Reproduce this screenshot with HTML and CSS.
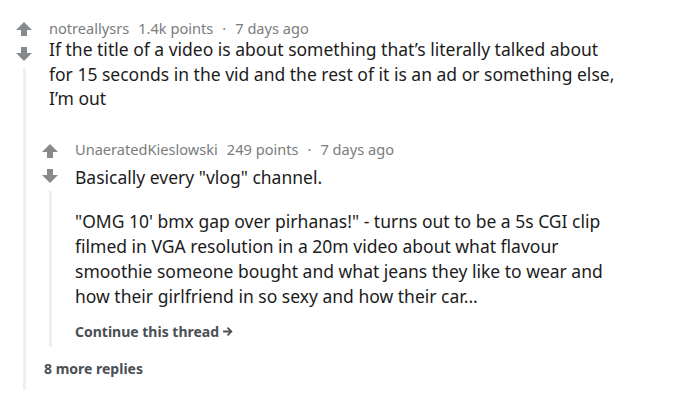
FILE: index.html
```html
<!DOCTYPE html>
<html>
<head>
<meta charset="utf-8">
<link rel="stylesheet" href="styles.css">
</head>
<body>
<div class="comment">
  <div class="votes">
    <svg class="arrow up" viewBox="0 0 16 14"><path d="M8 0 L16 8 L11 8 L11 14 L5 14 L5 8 L0 8 Z"/></svg>
    <svg class="arrow down" viewBox="0 0 16 14"><path d="M8 14 L16 6 L11 6 L11 0 L5 0 L5 6 L0 6 Z"/></svg>
    <div class="thread"></div>
  </div>
  <div class="content">
    <div class="meta"><span class="user">notreallysrs</span><span class="pts">1.4k points</span><span class="dot">·</span><span>7 days ago</span></div>
    <div class="body">
      <p>If the title of a video is about something that’s literally talked about for 15 seconds in the vid and the rest of it is an ad or something else, I’m out</p>
    </div>
    <div class="comment child">
      <div class="votes">
        <svg class="arrow up" viewBox="0 0 16 14"><path d="M8 0 L16 8 L11 8 L11 14 L5 14 L5 8 L0 8 Z"/></svg>
        <svg class="arrow down" viewBox="0 0 16 14"><path d="M8 14 L16 6 L11 6 L11 0 L5 0 L5 6 L0 6 Z"/></svg>
        <div class="thread"></div>
      </div>
      <div class="content">
        <div class="meta"><span class="user">UnaeratedKieslowski</span><span class="pts">249 points</span><span class="dot">·</span><span>7 days ago</span></div>
        <div class="body">
          <p class="first">Basically every "vlog" channel.</p>
          <p>"OMG 10' bmx gap over pirhanas!" - turns out to be a 5s CGI clip filmed in VGA resolution in a 20m video about what flavour smoothie someone bought and what jeans they like to wear and how their girlfriend in so sexy and how their car...</p>
        </div>
        <div class="more">Continue this thread <svg class="go" viewBox="0 0 10 10"><path d="M1 5 H8.5 M5 1.5 L8.5 5 L5 8.5" /></svg></div>
      </div>
    </div>
    <div class="replies">8 more replies</div>
  </div>
</div>
</body>
</html>
```
FILE: styles.css
```css
html, body {
  margin: 0;
  background: #ffffff;
}
body {
  padding: 19px 50px 0 16px;
  font-family: "Noto Sans", "Open Sans", sans-serif;
  color: #1c1c1c;
}
.comment {
  display: flex;
}
.votes {
  width: 16px;
  display: flex;
  flex-direction: column;
  align-items: center;
  flex: none;
  margin-right: 17px;
}
.arrow {
  display: block;
  width: 16px;
  height: 14px;
  fill: #878a8c;
}
.up {
  margin-top: 3px;
}
.down {
  margin-top: 11px;
}
.thread {
  width: 3px;
  flex: 1;
  background: #edeff1;
  margin-top: 7px;
}
.content {
  flex: 1;
  min-width: 0;
}
.meta {
  font-size: 14.6px;
  line-height: 18px;
  color: #7c7c7c;
  white-space: nowrap;
}
.meta .user {
  color: #787c7e;
  margin-right: 9px;
}
.meta .dot {
  margin: 0 9px;
}
.body p {
  margin: 0;
  font-size: 17.5px;
  line-height: 24.5px;
}
.child {
  margin-left: -7px;
  margin-top: 29px;
}
.child .up {
  margin-top: 4px;
}
.child .thread {
  margin-top: 8px;
}
.child .meta {
  margin-bottom: 7px;
}
.child .body p.first {
  margin-bottom: 19px;
}
.child .body p {
  line-height: 25px;
}
.more {
  font-size: 14px;
  line-height: 18px;
  font-weight: 700;
  color: #4a4f55;
  margin-top: 14px;
  padding-bottom: 6px;
  display: flex;
  align-items: center;
}
.go {
  width: 11px;
  height: 11px;
  margin-left: 3px;
  fill: none;
  stroke: #4a4f55;
  stroke-width: 1.6;
}
.replies {
  font-size: 14px;
  line-height: 18px;
  font-weight: 700;
  color: #4a4f55;
  margin: 13px 0 0 -5px;
  padding-bottom: 12px;
}
```
